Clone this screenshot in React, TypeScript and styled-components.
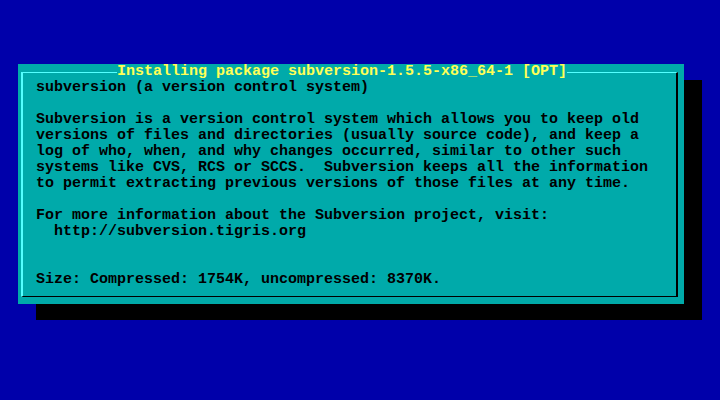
import React from "react";
import styled, { createGlobalStyle } from "styled-components";

const Global = createGlobalStyle`
  html, body { margin: 0; padding: 0; background: #0000aa; }
  body { font-family: "Liberation Mono", "DejaVu Sans Mono", monospace; }
`;

const Screen = styled.div`
  width: 720px;
  height: 400px;
  box-sizing: border-box;
  background: #0000aa;
  padding: 64px 0 0 18px;
  overflow: hidden;
`;

const Dialog = styled.div`
  width: 666px;
  height: 240px;
  box-sizing: border-box;
  background: #00aaaa;
  box-shadow: 18px 16px 0 0 #000;
  display: flex;
  flex-direction: column;
  padding: 8px 6px 7px 3px;
`;

const Frame = styled.div`
  flex: 1;
  display: flex;
  flex-direction: column;
  border-top: 1px solid #55ffff;
  border-left: 2px solid #55ffff;
  border-right: 2px solid #000000;
  border-bottom: 1px solid #000000;
  padding: 0 0 8px 13px;
`;

const Title = styled.div`
  align-self: flex-start;
  margin: -9px 0 0 81px;
  background: #00aaaa;
  color: #ffff55;
  font-size: 15px;
  font-weight: bold;
  line-height: 16px;
  white-space: pre;
`;

const Body = styled.div`
  color: #000;
  font-size: 15px;
  font-weight: bold;
  line-height: 16px;
  white-space: pre;
`;

const text = [
  "subversion (a version control system)",
  "",
  "Subversion is a version control system which allows you to keep old",
  "versions of files and directories (usually source code), and keep a",
  "log of who, when, and why changes occurred, similar to other such",
  "systems like CVS, RCS or SCCS.  Subversion keeps all the information",
  "to permit extracting previous versions of those files at any time.",
  "",
  "For more information about the Subversion project, visit:",
  "  http://subversion.tigris.org",
  "",
  "",
  "Size: Compressed: 1754K, uncompressed: 8370K.",
].join("\n");

export default function App() {
  return (
    <>
      <Global />
      <Screen>
        <Dialog>
          <Frame>
            <Title>Installing package subversion-1.5.5-x86_64-1 [OPT]</Title>
            <Body>{text}</Body>
          </Frame>
        </Dialog>
      </Screen>
    </>
  );
}
